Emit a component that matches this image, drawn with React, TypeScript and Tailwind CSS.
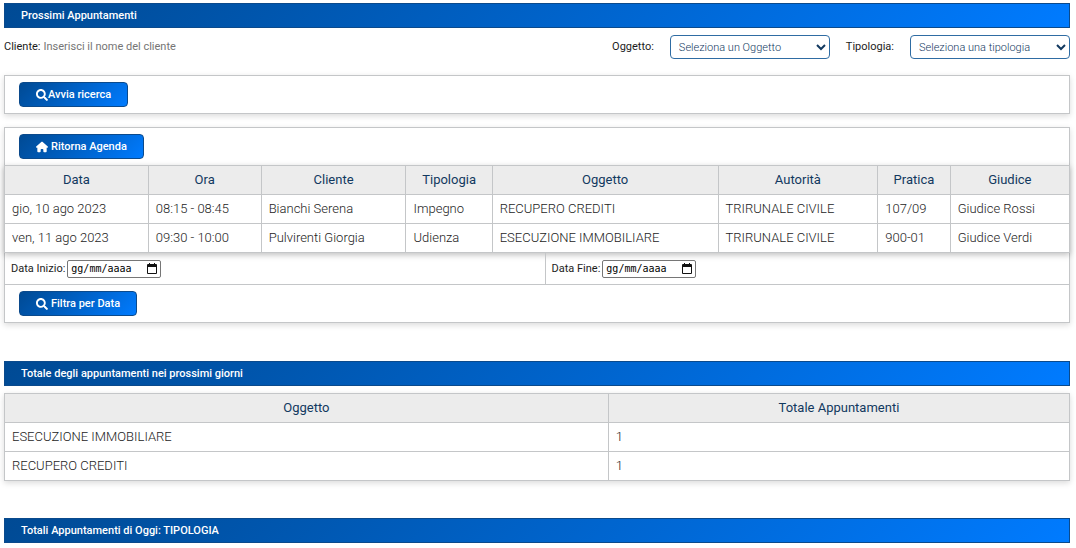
import { useRef } from "react";
import type { ReactNode } from "react";
import { FaSearch } from "react-icons/fa";
import { FaHouse } from "react-icons/fa6";

type Appointment = {
  data: string;
  ora: string;
  cliente: string;
  tipologia: string;
  oggetto: string;
  autorita: string;
  pratica: string;
  giudice: string;
};

const appointments: Appointment[] = [
  {
    data: "gio, 10 ago 2023",
    ora: "08:15 - 08:45",
    cliente: "Bianchi Serena",
    tipologia: "Impegno",
    oggetto: "RECUPERO CREDITI",
    autorita: "TRIRUNALE CIVILE",
    pratica: "107/09",
    giudice: "Giudice Rossi",
  },
  {
    data: "ven, 11 ago 2023",
    ora: "09:30 - 10:00",
    cliente: "Pulvirenti Giorgia",
    tipologia: "Udienza",
    oggetto: "ESECUZIONE IMMOBILIARE",
    autorita: "TRIRUNALE CIVILE",
    pratica: "900-01",
    giudice: "Giudice Verdi",
  },
];

const totals = [
  { oggetto: "ESECUZIONE IMMOBILIARE", totale: 1 },
  { oggetto: "RECUPERO CREDITI", totale: 1 },
];

function TitleBar({ children }: { children: ReactNode }) {
  return (
    <h2 className="flex h-[25px] items-center border border-[#0b4a8c] bg-linear-135 from-[#004a94] to-[#007bff] px-4 font-medium text-white">
      {children}
    </h2>
  );
}

function ActionButton({ children }: { children: ReactNode }) {
  return (
    <button
      type="button"
      className="flex h-[25px] items-center rounded-sm border border-[#0b4a8c] bg-linear-135 from-[#004a94] to-[#007bff] px-4 font-medium text-white"
    >
      {children}
    </button>
  );
}

function Th({ children, width }: { children: ReactNode; width: string }) {
  return (
    <th scope="col" className={`h-[29px] border border-[#c4c6c8] p-0 font-normal text-[#12395f] ${width}`}>
      {children}
    </th>
  );
}

function Td({ children }: { children: ReactNode }) {
  return <td className="h-[29px] border border-[#c4c6c8] py-0 pr-0 pl-[7px] font-light text-[#1c1c1c]">{children}</td>;
}

function FilterSelect({ id, label, placeholder }: { id: string; label: string; placeholder: string }) {
  return (
    <div className="flex items-center gap-4">
      <label htmlFor={id}>{label}</label>
      <select
        id={id}
        className="h-6 w-40 rounded-[4px] border border-[#2f6ca3] bg-white pr-1 pl-1 font-light text-[#12395f]"
      >
        <option>{placeholder}</option>
      </select>
    </div>
  );
}

function DateField({ id, label }: { id: string; label: string }) {
  const input = useRef<HTMLInputElement>(null);
  return (
    <div className="flex items-center gap-0.5">
      <label htmlFor={id}>{label}</label>
      <div className="flex h-[18px] w-[94px] items-center rounded-[2px] border border-[#767676] bg-white pr-[3px] pl-[3px]">
        <input
          ref={input}
          id={id}
          type="text"
          placeholder="gg/mm/aaaa"
          className="w-full min-w-0 font-['DejaVu_Sans_Mono',monospace] text-[10px] text-black outline-none placeholder:text-black"
        />
        <button type="button" aria-label="Apri calendario" onClick={() => input.current?.focus()}>
          <svg viewBox="0 0 10 11" className="h-[11px] w-[10px]" fill="#111">
            <path d="M1 1H2V0H3V1H7V0H8V1H9Q10 1 10 2V10Q10 11 9 11H1Q0 11 0 10V2Q0 1 1 1ZM1 4V10H9V4Z" fillRule="evenodd" />
          </svg>
        </button>
      </div>
    </div>
  );
}

export default function App() {
  return (
    <main className="bg-white pt-[3px] pr-[6px] pb-1 pl-1 font-[Roboto,sans-serif] text-[11px] leading-4 text-[#1c1c1c]">
      <TitleBar>Prossimi Appuntamenti</TitleBar>

      <div className="mt-[7px] flex h-6 items-center justify-between">
        <div className="flex items-center gap-[3px]">
          <label htmlFor="cliente">Cliente:</label>
          <input
            id="cliente"
            type="text"
            placeholder="Inserisci il nome del cliente"
            className="w-60 outline-none placeholder:text-[#757575]"
          />
        </div>
        <div className="flex items-center gap-4">
          <FilterSelect id="oggetto" label="Oggetto:" placeholder="Seleziona un Oggetto" />
          <FilterSelect id="tipologia" label="Tipologia:" placeholder="Seleziona una tipologia" />
        </div>
      </div>

      <section className="mt-4 border border-[#c4c6c8] px-[14px] py-[6px] shadow-[0_2px_6px_rgba(0,0,0,0.15)]">
        <ActionButton>
          <FaSearch className="size-3" />
          Avvia ricerca
        </ActionButton>
      </section>

      <section className="mt-[13px] border border-[#c4c6c8] shadow-[0_2px_6px_rgba(0,0,0,0.15)]">
        <div className="px-[14px] py-[6px]">
          <ActionButton>
            <FaHouse className="mr-[3px] size-3" />
            Ritorna Agenda
          </ActionButton>
        </div>
        <div className="-mx-px">
          <table className="w-full table-fixed border-collapse text-[13px] shadow-[0_2px_6px_rgba(0,0,0,0.25)]">
            <thead className="bg-[#ececec]">
              <tr>
                <Th width="w-[13.5%]">Data</Th>
                <Th width="w-[10.6%]">Ora</Th>
                <Th width="w-[13.6%]">Cliente</Th>
                <Th width="w-[8.1%]">Tipologia</Th>
                <Th width="w-[21.2%]">Oggetto</Th>
                <Th width="w-[15%]">Autorità</Th>
                <Th width="w-[6.8%]">Pratica</Th>
                <Th width="w-[11.2%]">Giudice</Th>
              </tr>
            </thead>
            <tbody>
              {appointments.map((a) => (
                <tr key={a.pratica}>
                  <Td>{a.data}</Td>
                  <Td>{a.ora}</Td>
                  <Td>{a.cliente}</Td>
                  <Td>{a.tipologia}</Td>
                  <Td>{a.oggetto}</Td>
                  <Td>{a.autorita}</Td>
                  <Td>{a.pratica}</Td>
                  <Td>{a.giudice}</Td>
                </tr>
              ))}
            </tbody>
          </table>
        </div>
        <div className="flex h-8 border-b border-[#c4c6c8]">
          <div className="flex w-[50.8%] items-center border-r border-[#c4c6c8] pl-[6px]">
            <DateField id="data-inizio" label="Data Inizio:" />
          </div>
          <div className="flex flex-1 items-center pl-[6px]">
            <DateField id="data-fine" label="Data Fine:" />
          </div>
        </div>
        <div className="px-[14px] py-[6px]">
          <ActionButton>
            <FaSearch className="mr-[3px] size-3" />
            Filtra per Data
          </ActionButton>
        </div>
      </section>

      <div className="mt-[38px]">
        <TitleBar>Totale degli appuntamenti nei prossimi giorni</TitleBar>
      </div>
      <table className="mt-[7px] w-full table-fixed border-collapse text-[13px] shadow-[0_2px_6px_rgba(0,0,0,0.15)]">
        <thead className="bg-[#ececec]">
          <tr>
            <Th width="w-[56.7%]">Oggetto</Th>
            <Th width="w-[43.3%]">Totale Appuntamenti</Th>
          </tr>
        </thead>
        <tbody>
          {totals.map((t) => (
            <tr key={t.oggetto}>
              <Td>{t.oggetto}</Td>
              <Td>{t.totale}</Td>
            </tr>
          ))}
        </tbody>
      </table>

      <div className="mt-[37px]">
        <TitleBar>Totali Appuntamenti di Oggi: TIPOLOGIA</TitleBar>
      </div>
    </main>
  );
}
